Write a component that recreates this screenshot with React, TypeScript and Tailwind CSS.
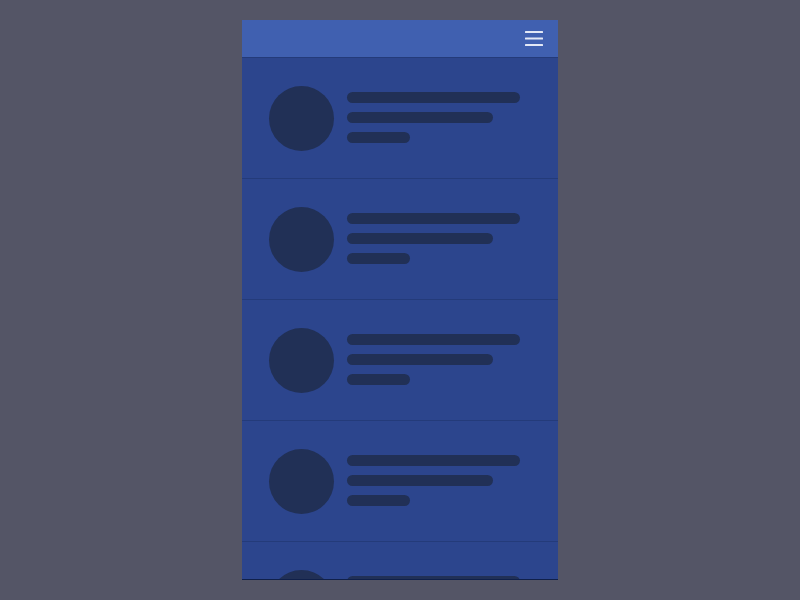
const rows = [0, 1, 2, 3, 4];

function SkeletonRow() {
  return (
    <div className="flex shrink-0 items-center border-t border-[#243b7a] px-[27px] pt-[28px] pb-[27px]">
      <div className="h-[65px] w-[65px] shrink-0 rounded-full bg-[#213056]" />
      <div className="ml-[13px] -mt-[2px] flex flex-col gap-[9px]">
        <div className="h-[11px] w-[173px] rounded-full bg-[#213056]" />
        <div className="h-[11px] w-[146px] rounded-full bg-[#213056]" />
        <div className="h-[11px] w-[63px] rounded-full bg-[#213056]" />
      </div>
    </div>
  );
}

export default function App() {
  return (
    <div className="flex h-[600px] w-[800px] items-start justify-center bg-[#545566] pt-[20px]">
      <div className="flex h-[560px] w-[316px] flex-col overflow-hidden border-b border-[#10204a] bg-[#2c458d]">
        {/* Header */}
        <div className="flex h-[37px] shrink-0 items-center justify-end bg-[#4060b0] pr-[15px]">
          <svg width="18" height="15" viewBox="0 0 18 15" fill="none">
            <rect x="0" y="0" width="18" height="2" rx="0.5" fill="#e3e8f6" />
            <rect x="0" y="6.5" width="18" height="2" rx="0.5" fill="#e3e8f6" />
            <rect x="0" y="13" width="18" height="2" rx="0.5" fill="#e3e8f6" />
          </svg>
        </div>

        {/* List */}
        <div className="flex flex-col overflow-hidden">
          {rows.map((r) => (
            <SkeletonRow key={r} />
          ))}
        </div>
      </div>
    </div>
  );
}
